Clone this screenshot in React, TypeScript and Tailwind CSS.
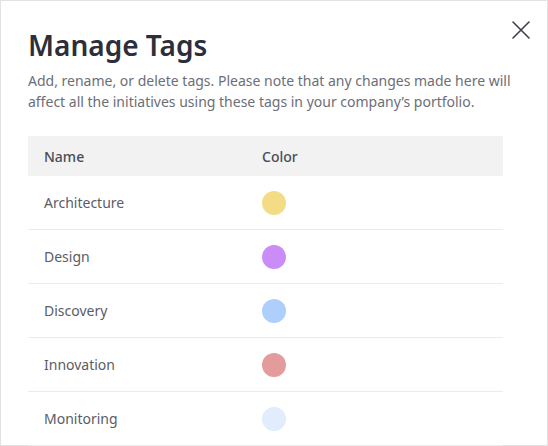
const tags = [
  { name: "Architecture", color: "bg-[#f4dc86]" },
  { name: "Design", color: "bg-[#ca8cf6]" },
  { name: "Discovery", color: "bg-[#aecffc]" },
  { name: "Innovation", color: "bg-[#e39c9b]" },
  { name: "Monitoring", color: "bg-[#e1ecfc]" },
];

export default function App() {
  return (
    <div className="w-[548px] h-[446px] bg-white overflow-hidden" style={{ fontFamily: '"Noto Sans", "Open Sans", sans-serif' }}>
      <div className="relative h-full border border-[#e2e2e2] pl-[27px] pt-[26px]">
        {/* Close button */}
        <button className="absolute right-[16px] top-[19px] text-[#3d3f4b]">
          <svg width="20" height="20" viewBox="0 0 20 20" fill="none" stroke="currentColor" strokeWidth="1.6" strokeLinecap="round">
            <path d="M2 2l16 16M18 2L2 18" />
          </svg>
        </button>

        <h1 className="text-[28px] leading-[36px] font-semibold text-[#2c2e3b]">Manage Tags</h1>
        <p className="mt-[7px] w-[490px] text-[14px] leading-[21px] text-[#6c6e78]">
          Add, rename, or delete tags. Please note that any changes made here will affect all the initiatives using these tags in your company’s portfolio.
        </p>

        {/* Table */}
        <div className="mt-[24px] w-[475px]">
          <div className="flex h-[40px] items-center bg-[#f2f2f2] text-[14px] font-medium text-[#4a4c58]">
            <div className="w-[234px] pl-4">Name</div>
            <div>Color</div>
          </div>
          {tags.map((t) => (
            <div key={t.name} className="flex h-[54px] items-center border-b border-[#ebebeb] text-[14px] text-[#5a5c66]">
              <div className="w-[234px] pl-4">{t.name}</div>
              <div className={`h-6 w-6 rounded-full ${t.color}`} />
            </div>
          ))}
        </div>
      </div>
    </div>
  );
}
